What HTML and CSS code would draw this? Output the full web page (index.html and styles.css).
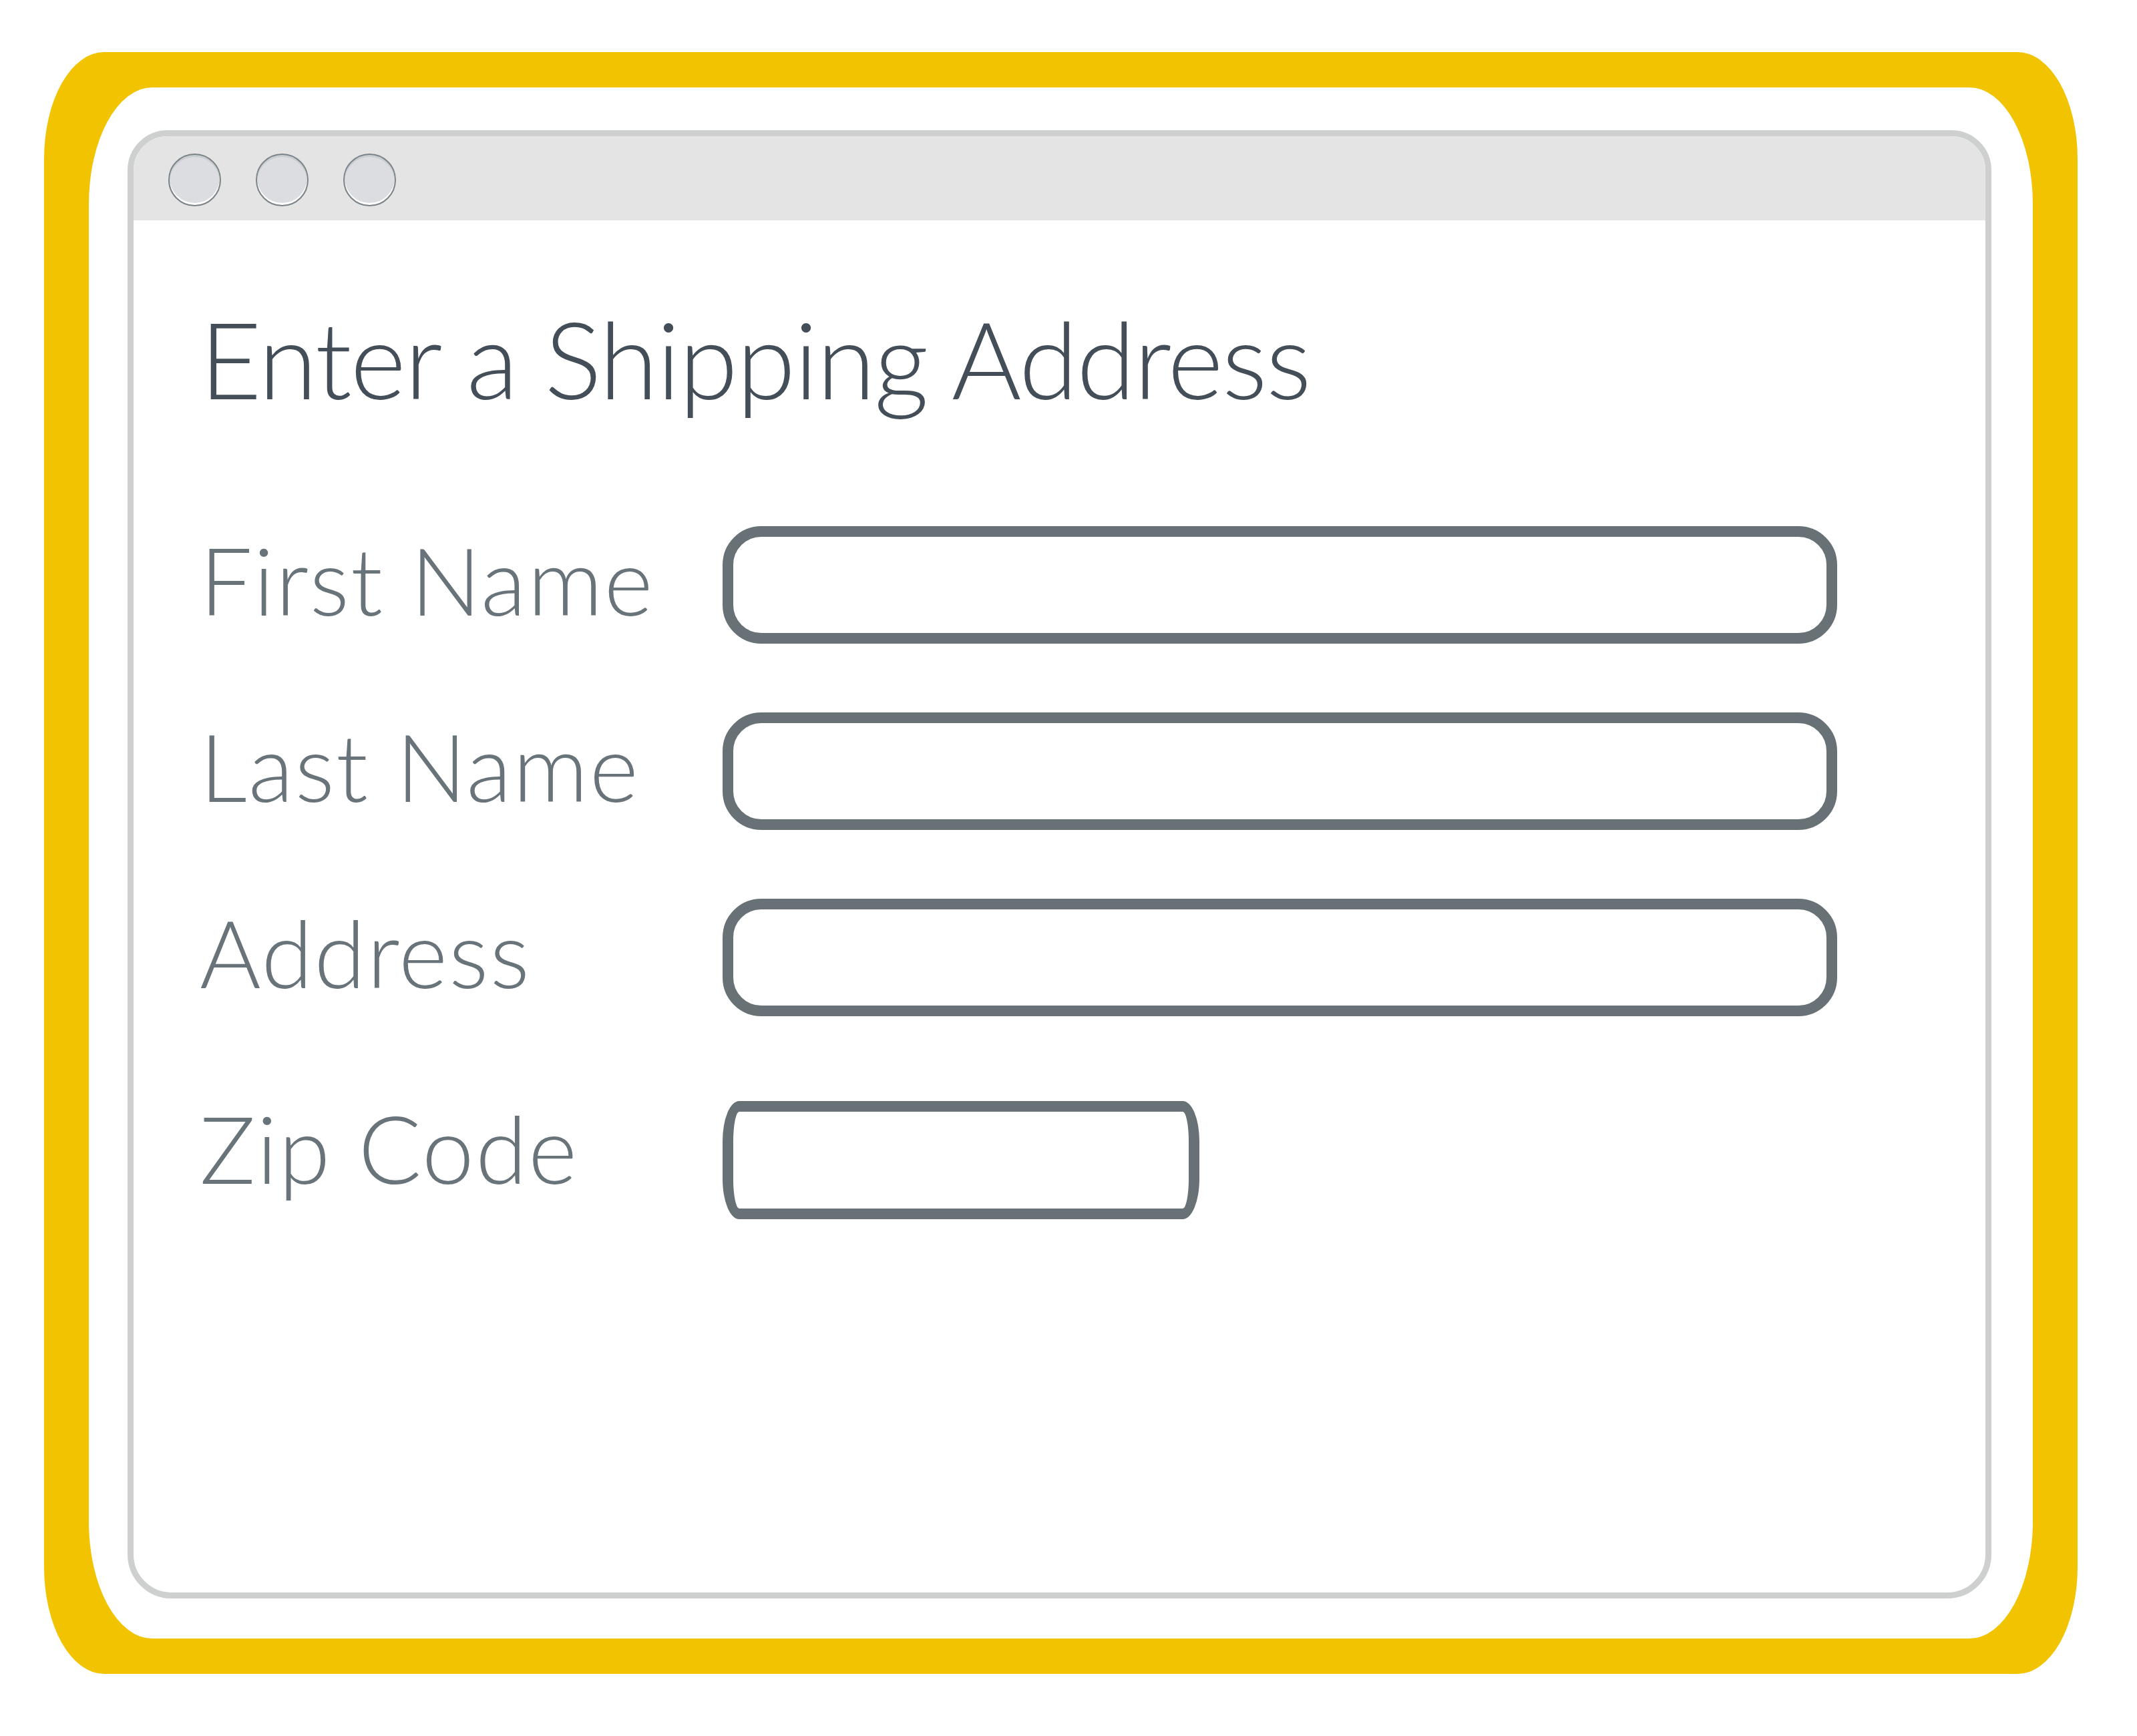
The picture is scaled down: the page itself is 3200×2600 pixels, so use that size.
FILE: index.html
```html
<!DOCTYPE html>
<html lang="en">
<head>
<meta charset="utf-8">
<title>Enter a Shipping Address</title>
<link rel="stylesheet" href="styles.css">
</head>
<body>
<div class="frame">
  <div class="mat">
    <div class="window">
      <div class="titlebar">
        <span class="dot"></span>
        <span class="dot"></span>
        <span class="dot"></span>
      </div>
      <div class="content">
        <h1 class="title">Enter a Shipping Address</h1>
        <div class="form">
          <div class="row">
            <label class="label">First Name</label>
            <div class="field"></div>
          </div>
          <div class="row">
            <label class="label">Last Name</label>
            <div class="field"></div>
          </div>
          <div class="row">
            <label class="label">Address</label>
            <div class="field"></div>
          </div>
          <div class="row row-zip">
            <label class="label">Zip Code</label>
            <div class="field field-zip"></div>
          </div>
        </div>
      </div>
    </div>
  </div>
</div>
</body>
</html>
```

FILE: styles.css
```css
* { box-sizing: border-box; }
html, body {
  margin: 0;
  padding: 0;
  background: #ffffff;
}
body {
  width: 3200px;
  height: 2600px;
  padding: 78px 0 0 66px;
  font-family: "Lato", "Noto Sans", sans-serif;
}
.frame {
  width: 3045px;
  height: 2429px;
  background: #f2c300;
  border-radius: 90px / 160px;
  padding: 53px 67px 53px 67px;
  display: flex;
}
.mat {
  flex: 1;
  background: #ffffff;
  border-radius: 95px / 175px;
  padding: 64px 62px 60px 58px;
  display: flex;
}
.window {
  flex: 1;
  border: 9px solid #cecfcf;
  border-radius: 60px 60px 66px 66px;
  overflow: hidden;
  background: #ffffff;
  display: flex;
  flex-direction: column;
}
.titlebar {
  height: 126px;
  background: #e4e4e4;
  display: flex;
  align-items: center;
  gap: 52px;
  padding: 5px 0 0 52px;
}
.dot {
  width: 79px;
  height: 79px;
  border-radius: 50%;
  background: #dbdde1;
  border: 2px solid #7a8388;
  box-shadow: inset 0 -3px 0 #ffffff, inset 0 3px 0 #c9ccd0;
}
.content {
  padding: 126px 0 0 99px;
}
.title {
  margin: 0 0 172px 0;
  font-size: 160px;
  line-height: 1;
  font-weight: 300;
  color: #444e58;
  letter-spacing: -2px;
}
.form {
  display: flex;
  flex-direction: column;
  gap: 103px;
}
.row {
  display: grid;
  grid-template-columns: 783px 1669px;
  align-items: start;
}
.row-zip {
  margin-top: 24px;
}
.label {
  font-size: 140px;
  line-height: 1;
  font-weight: 300;
  color: #68737a;
  letter-spacing: 2px;
  padding-top: 10px;
  white-space: nowrap;
}
.row-zip .label {
  padding-top: 0;
}
.field {
  height: 176px;
  border: 16px solid #687276;
  border-radius: 58px;
  background: #ffffff;
}
.field-zip {
  width: 714px;
  height: 177px;
  border-radius: 25px / 60px;
}
```
